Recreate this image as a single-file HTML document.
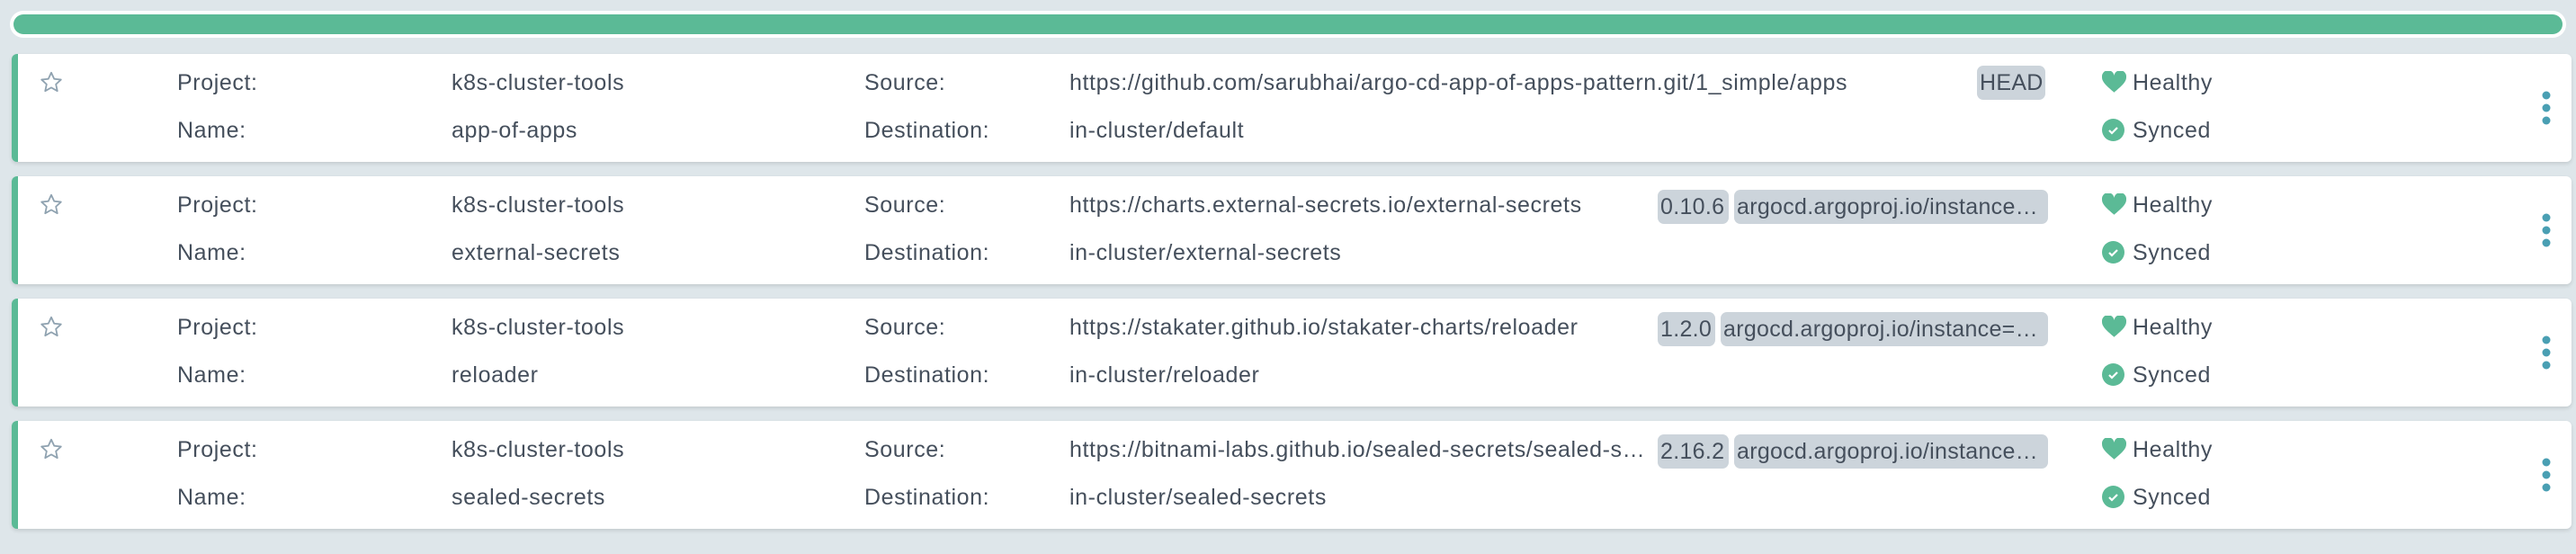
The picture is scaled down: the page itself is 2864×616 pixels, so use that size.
<!DOCTYPE html>
<html><head><meta charset="utf-8"><style>
body{margin:0;width:2864px;height:616px;background:#dee6ea;font-family:"Liberation Sans",sans-serif;color:#454f5c;position:relative;overflow:hidden}
.bar{position:absolute;left:11px;top:12px;width:2842px;height:30px;background:#fff;border-radius:16px}
.bar div{position:absolute;left:4px;top:4px;right:4px;bottom:4px;background:#5bba96;border-radius:12px}
.card{position:absolute;left:13px;width:2839px;height:120px;background:#fff;border-radius:6px;border-left:7px solid #5bba96;box-shadow:0 2px 4px rgba(0,0,0,.12)}
.t{position:absolute;font-size:25px;line-height:30px;white-space:nowrap;letter-spacing:0.6px}
.tag{position:absolute;background:#ccd4db;border-radius:7px;height:38px;font-size:25px;line-height:38px;padding:0 3px;white-space:nowrap;box-sizing:border-box;letter-spacing:0.3px}
.star{position:absolute;left:23px;top:18px}
.heart{position:absolute;left:2317px;top:19px}
.chk{position:absolute;left:2317px;top:72px;width:25px;height:25px;border-radius:50%;background:#5bba96}
.keb{position:absolute;left:2805px;top:40px}
</style></head><body>
<div class="bar"><div></div></div>

<div class="card" style="top:60px">
<svg class="star" width="28" height="27" viewBox="0 0 24 24"><path d="M12 2.5l2.9 6.2 6.7.7-5 4.6 1.4 6.6L12 17.2 6 20.6l1.4-6.6-5-4.6 6.7-.7z" fill="none" stroke="#8fa2b0" stroke-width="1.6" stroke-linejoin="round"/></svg>
<div class="t" style="left:177px;top:17px">Project:</div><div class="t" style="left:482px;top:17px">k8s-cluster-tools</div>
<div class="t" style="left:177px;top:70px">Name:</div><div class="t" style="left:482px;top:70px">app-of-apps</div>
<div class="t" style="left:941px;top:17px">Source:</div><div class="t" style="left:1169px;top:17px">https://github.com/sarubhai/argo-cd-app-of-apps-pattern.git/1_simple/apps</div>
<div class="t" style="left:941px;top:70px">Destination:</div><div class="t" style="left:1169px;top:70px">in-cluster/default</div>
<div class="tag" style="left:2178px;top:13px;width:76px">HEAD</div>
<svg class="heart" width="27" height="25" viewBox="0 0 24 22"><path d="M12 21C5 15 0 11 0 6a6 6 0 0 1 12-1.5A6 6 0 0 1 24 6c0 5-5 9-12 15z" fill="#5bba96"/></svg>
<div class="t" style="left:2351px;top:17px">Healthy</div>
<div class="chk"><svg width="25" height="25" viewBox="0 0 25 25"><path d="M8 13l3 3 6-6" fill="none" stroke="#fff" stroke-width="2.2"/></svg></div>
<div class="t" style="left:2351px;top:70px">Synced</div>
<svg class="keb" width="12" height="40"><circle cx="6" cy="6" r="4.5" fill="#4a9fb3"/><circle cx="6" cy="20" r="4.5" fill="#4a9fb3"/><circle cx="6" cy="34" r="4.5" fill="#4a9fb3"/></svg>
</div>

<div class="card" style="top:196px">
<svg class="star" width="28" height="27" viewBox="0 0 24 24"><path d="M12 2.5l2.9 6.2 6.7.7-5 4.6 1.4 6.6L12 17.2 6 20.6l1.4-6.6-5-4.6 6.7-.7z" fill="none" stroke="#8fa2b0" stroke-width="1.6" stroke-linejoin="round"/></svg>
<div class="t" style="left:177px;top:17px">Project:</div><div class="t" style="left:482px;top:17px">k8s-cluster-tools</div>
<div class="t" style="left:177px;top:70px">Name:</div><div class="t" style="left:482px;top:70px">external-secrets</div>
<div class="t" style="left:941px;top:17px">Source:</div><div class="t" style="left:1169px;top:17px">https://charts.external-secrets.io/external-secrets</div>
<div class="t" style="left:941px;top:70px">Destination:</div><div class="t" style="left:1169px;top:70px">in-cluster/external-secrets</div>
<div class="tag" style="left:1823px;top:15px;width:79px">0.10.6</div>
<div class="tag" style="left:1908px;top:15px;width:349px;overflow:hidden">argocd.argoproj.io/instance…</div>
<svg class="heart" width="27" height="25" viewBox="0 0 24 22"><path d="M12 21C5 15 0 11 0 6a6 6 0 0 1 12-1.5A6 6 0 0 1 24 6c0 5-5 9-12 15z" fill="#5bba96"/></svg>
<div class="t" style="left:2351px;top:17px">Healthy</div>
<div class="chk"><svg width="25" height="25" viewBox="0 0 25 25"><path d="M8 13l3 3 6-6" fill="none" stroke="#fff" stroke-width="2.2"/></svg></div>
<div class="t" style="left:2351px;top:70px">Synced</div>
<svg class="keb" width="12" height="40"><circle cx="6" cy="6" r="4.5" fill="#4a9fb3"/><circle cx="6" cy="20" r="4.5" fill="#4a9fb3"/><circle cx="6" cy="34" r="4.5" fill="#4a9fb3"/></svg>
</div>

<div class="card" style="top:332px">
<svg class="star" width="28" height="27" viewBox="0 0 24 24"><path d="M12 2.5l2.9 6.2 6.7.7-5 4.6 1.4 6.6L12 17.2 6 20.6l1.4-6.6-5-4.6 6.7-.7z" fill="none" stroke="#8fa2b0" stroke-width="1.6" stroke-linejoin="round"/></svg>
<div class="t" style="left:177px;top:17px">Project:</div><div class="t" style="left:482px;top:17px">k8s-cluster-tools</div>
<div class="t" style="left:177px;top:70px">Name:</div><div class="t" style="left:482px;top:70px">reloader</div>
<div class="t" style="left:941px;top:17px">Source:</div><div class="t" style="left:1169px;top:17px">https://stakater.github.io/stakater-charts/reloader</div>
<div class="t" style="left:941px;top:70px">Destination:</div><div class="t" style="left:1169px;top:70px">in-cluster/reloader</div>
<div class="tag" style="left:1823px;top:15px;width:64px">1.2.0</div>
<div class="tag" style="left:1893px;top:15px;width:364px;overflow:hidden">argocd.argoproj.io/instance=…</div>
<svg class="heart" width="27" height="25" viewBox="0 0 24 22"><path d="M12 21C5 15 0 11 0 6a6 6 0 0 1 12-1.5A6 6 0 0 1 24 6c0 5-5 9-12 15z" fill="#5bba96"/></svg>
<div class="t" style="left:2351px;top:17px">Healthy</div>
<div class="chk"><svg width="25" height="25" viewBox="0 0 25 25"><path d="M8 13l3 3 6-6" fill="none" stroke="#fff" stroke-width="2.2"/></svg></div>
<div class="t" style="left:2351px;top:70px">Synced</div>
<svg class="keb" width="12" height="40"><circle cx="6" cy="6" r="4.5" fill="#4a9fb3"/><circle cx="6" cy="20" r="4.5" fill="#4a9fb3"/><circle cx="6" cy="34" r="4.5" fill="#4a9fb3"/></svg>
</div>

<div class="card" style="top:468px">
<svg class="star" width="28" height="27" viewBox="0 0 24 24"><path d="M12 2.5l2.9 6.2 6.7.7-5 4.6 1.4 6.6L12 17.2 6 20.6l1.4-6.6-5-4.6 6.7-.7z" fill="none" stroke="#8fa2b0" stroke-width="1.6" stroke-linejoin="round"/></svg>
<div class="t" style="left:177px;top:17px">Project:</div><div class="t" style="left:482px;top:17px">k8s-cluster-tools</div>
<div class="t" style="left:177px;top:70px">Name:</div><div class="t" style="left:482px;top:70px">sealed-secrets</div>
<div class="t" style="left:941px;top:17px">Source:</div><div class="t" style="left:1169px;top:17px;width:650px;overflow:hidden">https://bitnami-labs.github.io/sealed-secrets/sealed-s…</div>
<div class="t" style="left:941px;top:70px">Destination:</div><div class="t" style="left:1169px;top:70px">in-cluster/sealed-secrets</div>
<div class="tag" style="left:1823px;top:15px;width:79px">2.16.2</div>
<div class="tag" style="left:1908px;top:15px;width:349px;overflow:hidden">argocd.argoproj.io/instance…</div>
<svg class="heart" width="27" height="25" viewBox="0 0 24 22"><path d="M12 21C5 15 0 11 0 6a6 6 0 0 1 12-1.5A6 6 0 0 1 24 6c0 5-5 9-12 15z" fill="#5bba96"/></svg>
<div class="t" style="left:2351px;top:17px">Healthy</div>
<div class="chk"><svg width="25" height="25" viewBox="0 0 25 25"><path d="M8 13l3 3 6-6" fill="none" stroke="#fff" stroke-width="2.2"/></svg></div>
<div class="t" style="left:2351px;top:70px">Synced</div>
<svg class="keb" width="12" height="40"><circle cx="6" cy="6" r="4.5" fill="#4a9fb3"/><circle cx="6" cy="20" r="4.5" fill="#4a9fb3"/><circle cx="6" cy="34" r="4.5" fill="#4a9fb3"/></svg>
</div>
</body></html>
